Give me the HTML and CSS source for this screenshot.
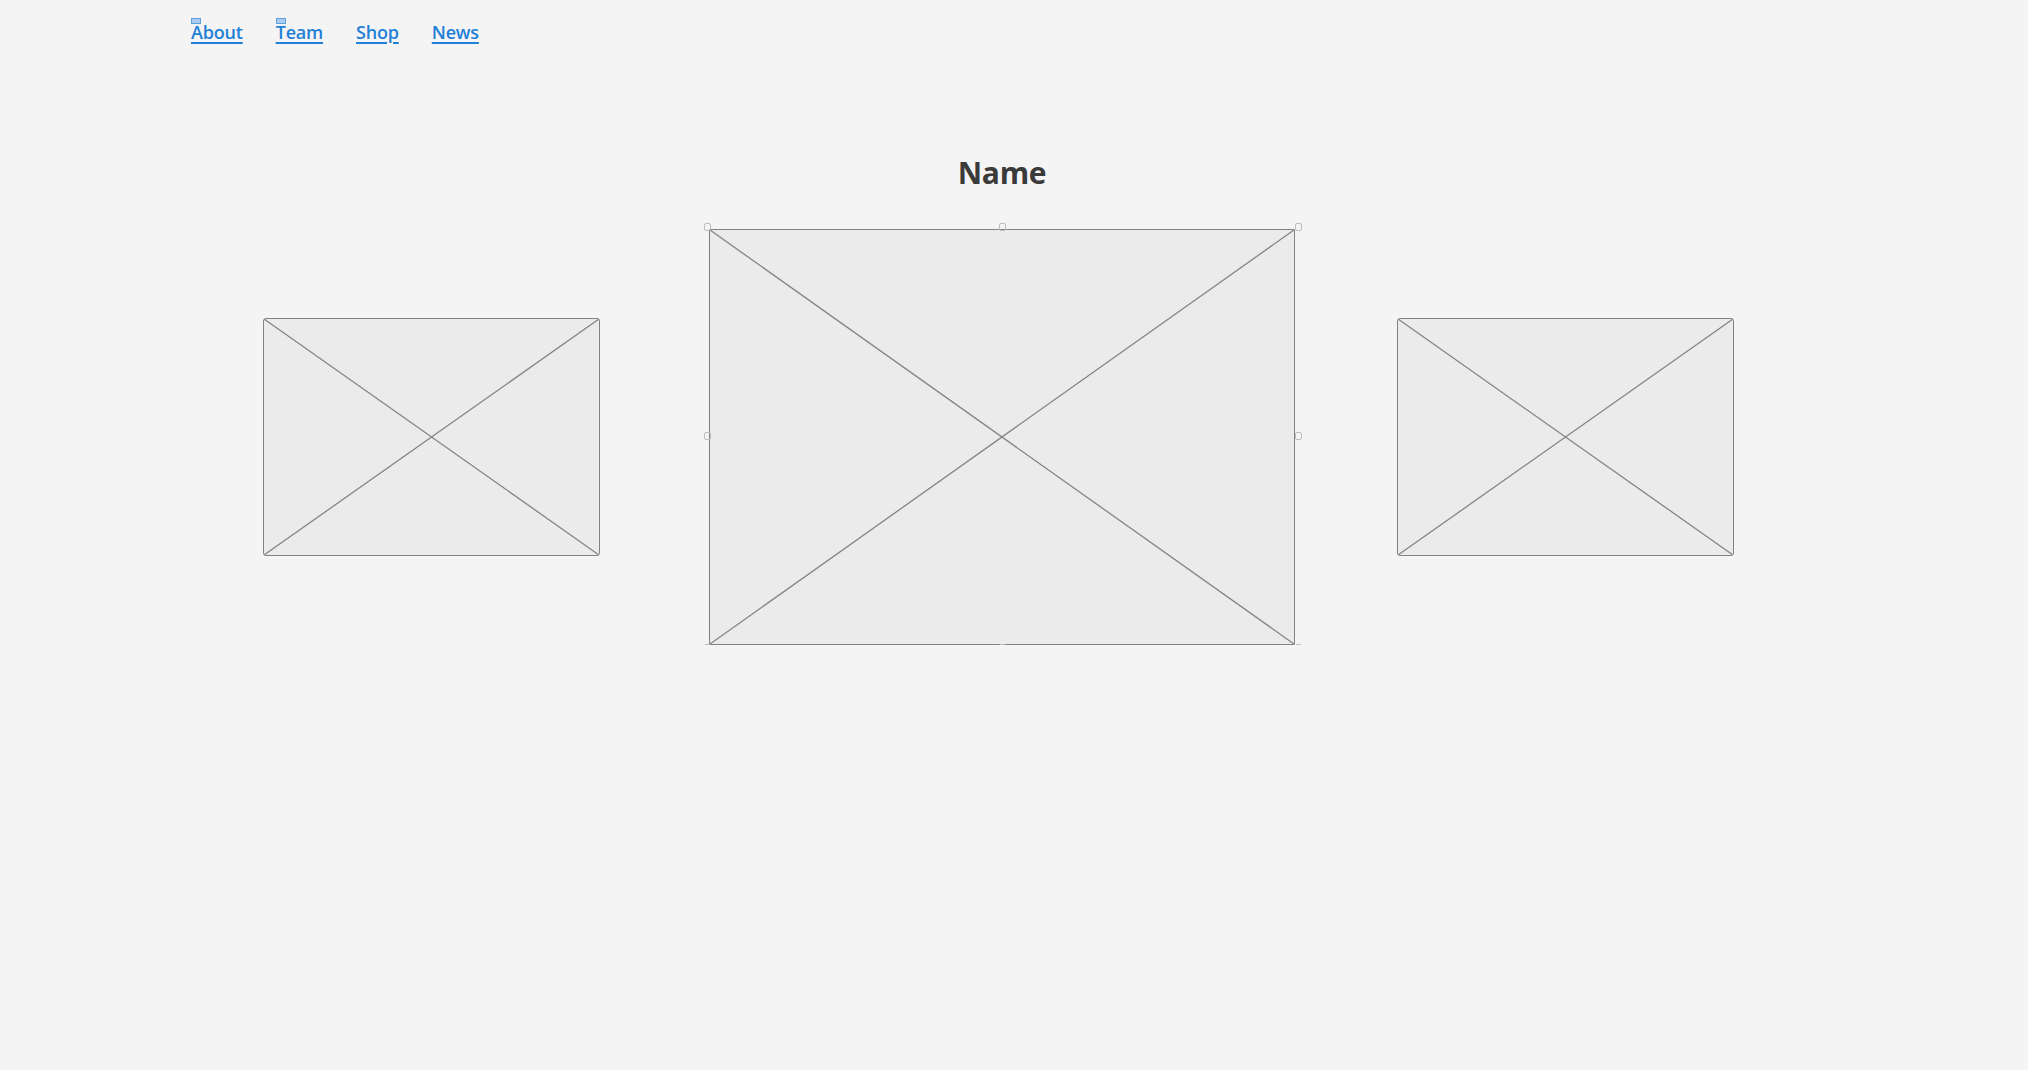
FILE: index.html
```html
<!DOCTYPE html>
<html>
<head>
<meta charset="utf-8">
<link rel="stylesheet" href="styles.css">
</head>
<body>
<nav class="nav">
  <a class="nav-link" href="#"><span class="mark"></span>About</a>
  <a class="nav-link" href="#"><span class="mark"></span>Team</a>
  <a class="nav-link" href="#">Shop</a>
  <a class="nav-link" href="#">News</a>
</nav>
<h1 class="title">Name</h1>
<div class="gallery">
  <div class="ph side left">
    <svg viewBox="0 0 100 100" preserveAspectRatio="none"><line x1="0" y1="0" x2="100" y2="100" vector-effect="non-scaling-stroke"/><line x1="100" y1="0" x2="0" y2="100" vector-effect="non-scaling-stroke"/></svg>
  </div>
  <div class="ph main">
    <svg viewBox="0 0 100 100" preserveAspectRatio="none"><line x1="0" y1="0" x2="100" y2="100" vector-effect="non-scaling-stroke"/><line x1="100" y1="0" x2="0" y2="100" vector-effect="non-scaling-stroke"/></svg>
    <span class="h tl"></span><span class="h tc"></span><span class="h tr"></span>
    <span class="h ml"></span><span class="h mr"></span>
    <span class="h bl"></span><span class="h bc"></span><span class="h br"></span>
  </div>
  <div class="ph side right">
    <svg viewBox="0 0 100 100" preserveAspectRatio="none"><line x1="0" y1="0" x2="100" y2="100" vector-effect="non-scaling-stroke"/><line x1="100" y1="0" x2="0" y2="100" vector-effect="non-scaling-stroke"/></svg>
  </div>
</div>
</body>
</html>
```
FILE: styles.css
```css
html, body {
  margin: 0;
  padding: 0;
  background: #f4f4f4;
  font-family: "Open Sans", "Noto Sans", sans-serif;
}
.nav {
  display: flex;
  gap: 33px;
  padding: 20px 0 0 191px;
  height: 40px;
  box-sizing: content-box;
}
.nav-link {
  position: relative;
  color: #1f80d8;
  font-weight: 600;
  font-size: 18px;
  line-height: 24px;
  text-decoration: underline;
  text-decoration-thickness: 2px;
  text-underline-offset: 3px;
  letter-spacing: -0.2px;
}
.mark {
  position: absolute;
  left: 0;
  top: -2px;
  width: 10px;
  height: 6px;
  background: #a9cdf0;
  border: 1px solid #5e9fe0;
  box-sizing: border-box;
}
.title {
  margin: 93px 0 0 0;
  padding-right: 24px;
  text-align: center;
  font-size: 30px;
  line-height: 40px;
  font-weight: 700;
  color: #3a3a3a;
  letter-spacing: -0.3px;
}
.gallery {
  display: flex;
  align-items: center;
  padding-left: 263px;
  margin-top: 36px;
}
.ph {
  position: relative;
  background: #ebebeb;
  border: 1.5px solid #828282;
  border-radius: 3px;
  box-sizing: border-box;
}
.ph svg {
  position: absolute;
  inset: 0;
  width: 100%;
  height: 100%;
}
.ph line {
  stroke: #858585;
  stroke-width: 1.3;
}
.side {
  width: 337px;
  height: 238px;
}
.main {
  width: 586px;
  height: 416px;
  margin: 0 102px 0 109px;
  border-radius: 1px;
}
.h {
  position: absolute;
  z-index: 1;
  width: 7px;
  height: 8px;
  border: 1px solid #bdbdbd;
  border-radius: 2px;
  box-sizing: border-box;
}
.tl { left: -6px; top: -7px; }
.tc { left: 289px; top: -7px; }
.tr { right: -8px; top: -7px; }
.ml { left: -6px; top: 202px; }
.mr { right: -8px; top: 202px; }
.bl { left: -6px; bottom: -8px; }
.bc { left: 289px; bottom: -8px; }
.br { right: -8px; bottom: -8px; }
```
